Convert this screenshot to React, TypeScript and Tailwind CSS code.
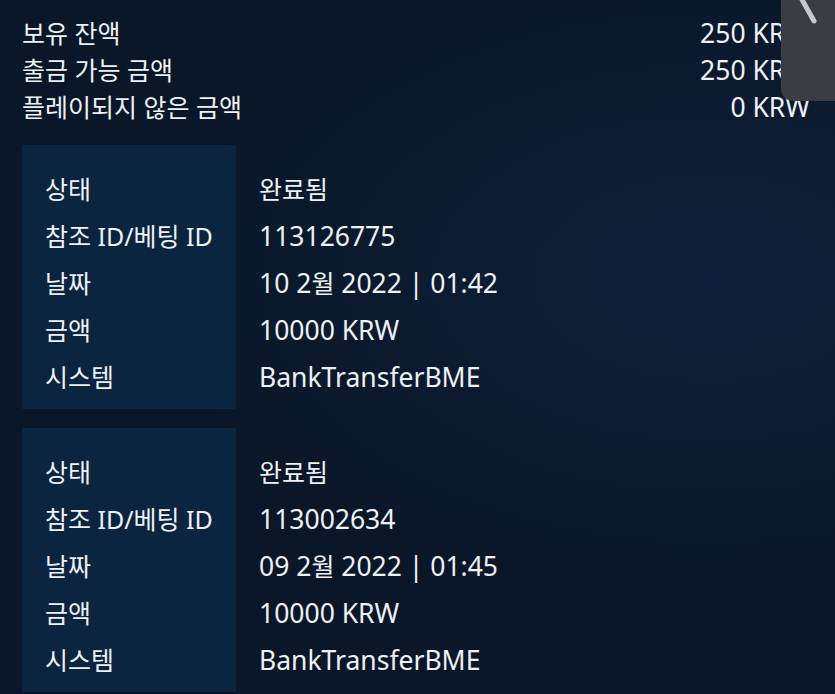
import React from "react";

const font = { fontFamily: '"Noto Sans", "Noto Sans CJK KR", sans-serif' };

type Row = [string, string];

const tx1: Row[] = [
  ["상태", "완료됨"],
  ["참조 ID/베팅 ID", "113126775"],
  ["날짜", "10 2월 2022 | 01:42"],
  ["금액", "10000 KRW"],
  ["시스템", "BankTransferBME"],
];
const tx2: Row[] = [
  ["상태", "완료됨"],
  ["참조 ID/베팅 ID", "113002634"],
  ["날짜", "09 2월 2022 | 01:45"],
  ["금액", "10000 KRW"],
  ["시스템", "BankTransferBME"],
];

function Mixed({ text }: { text: string }) {
  const parts = text.split(/([\uAC00-\uD7A3]+)/).filter((p) => p.length > 0);
  return (
    <>
      {parts.map((p, i) =>
        /[\uAC00-\uD7A3]/.test(p) ? (
          <span key={i}>{p}</span>
        ) : (
          <span key={i} className="text-[26.5px]">
            {p}
          </span>
        )
      )}
    </>
  );
}

function Tx({ rows }: { rows: Row[] }) {
  return (
    <div className="flex">
      <div className="w-[214px] shrink-0 bg-[#0b2440] pl-[23px] pt-[21px] pb-[8px]">
        {rows.map(([l]) => (
          <div key={l} className="h-[47px] leading-[47px] whitespace-nowrap">
            {l}
          </div>
        ))}
      </div>
      <div className="pl-[23px] pt-[21px]">
        {rows.map(([l, v]) => (
          <div key={l} className="h-[47px] leading-[47px] whitespace-nowrap">
            <Mixed text={v} />
          </div>
        ))}
      </div>
    </div>
  );
}

export default function App() {
  return (
    <div
      className="relative w-[835px] h-[694px] overflow-hidden bg-[#0a1729] text-[#eef1f5] text-[25px]"
      style={font}
    >
      <div className="pointer-events-none absolute inset-0 bg-[radial-gradient(ellipse_at_85%_40%,#0d1f38_0%,#0a1729_55%)]" />
      <div className="relative pl-[22px] pr-[25px] pt-[15px]">
        <div className="flex flex-col">
          {[
            ["보유 잔액", "250 KRW"],
            ["출금 가능 금액", "250 KRW"],
            ["플레이되지 않은 금액", "0 KRW"],
          ].map(([l, v]) => (
            <div key={l} className="flex justify-between h-[37px] leading-[37px]">
              <span>{l}</span>
              <span className="text-[26.5px]">{v}</span>
            </div>
          ))}
        </div>
        <div className="mt-[19px] flex flex-col gap-[19px]">
          <Tx rows={tx1} />
          <Tx rows={tx2} />
        </div>
      </div>
      <div className="absolute right-0 top-0 w-[54px] h-[101px] bg-[#3a3d41] rounded-bl-[12px] overflow-hidden">
        <svg width="54" height="101" className="absolute left-0 top-0">
          <line x1="19" y1="-4" x2="33" y2="21" stroke="#c5c9cf" strokeWidth="5" strokeLinecap="round" />
        </svg>
      </div>
    </div>
  );
}
